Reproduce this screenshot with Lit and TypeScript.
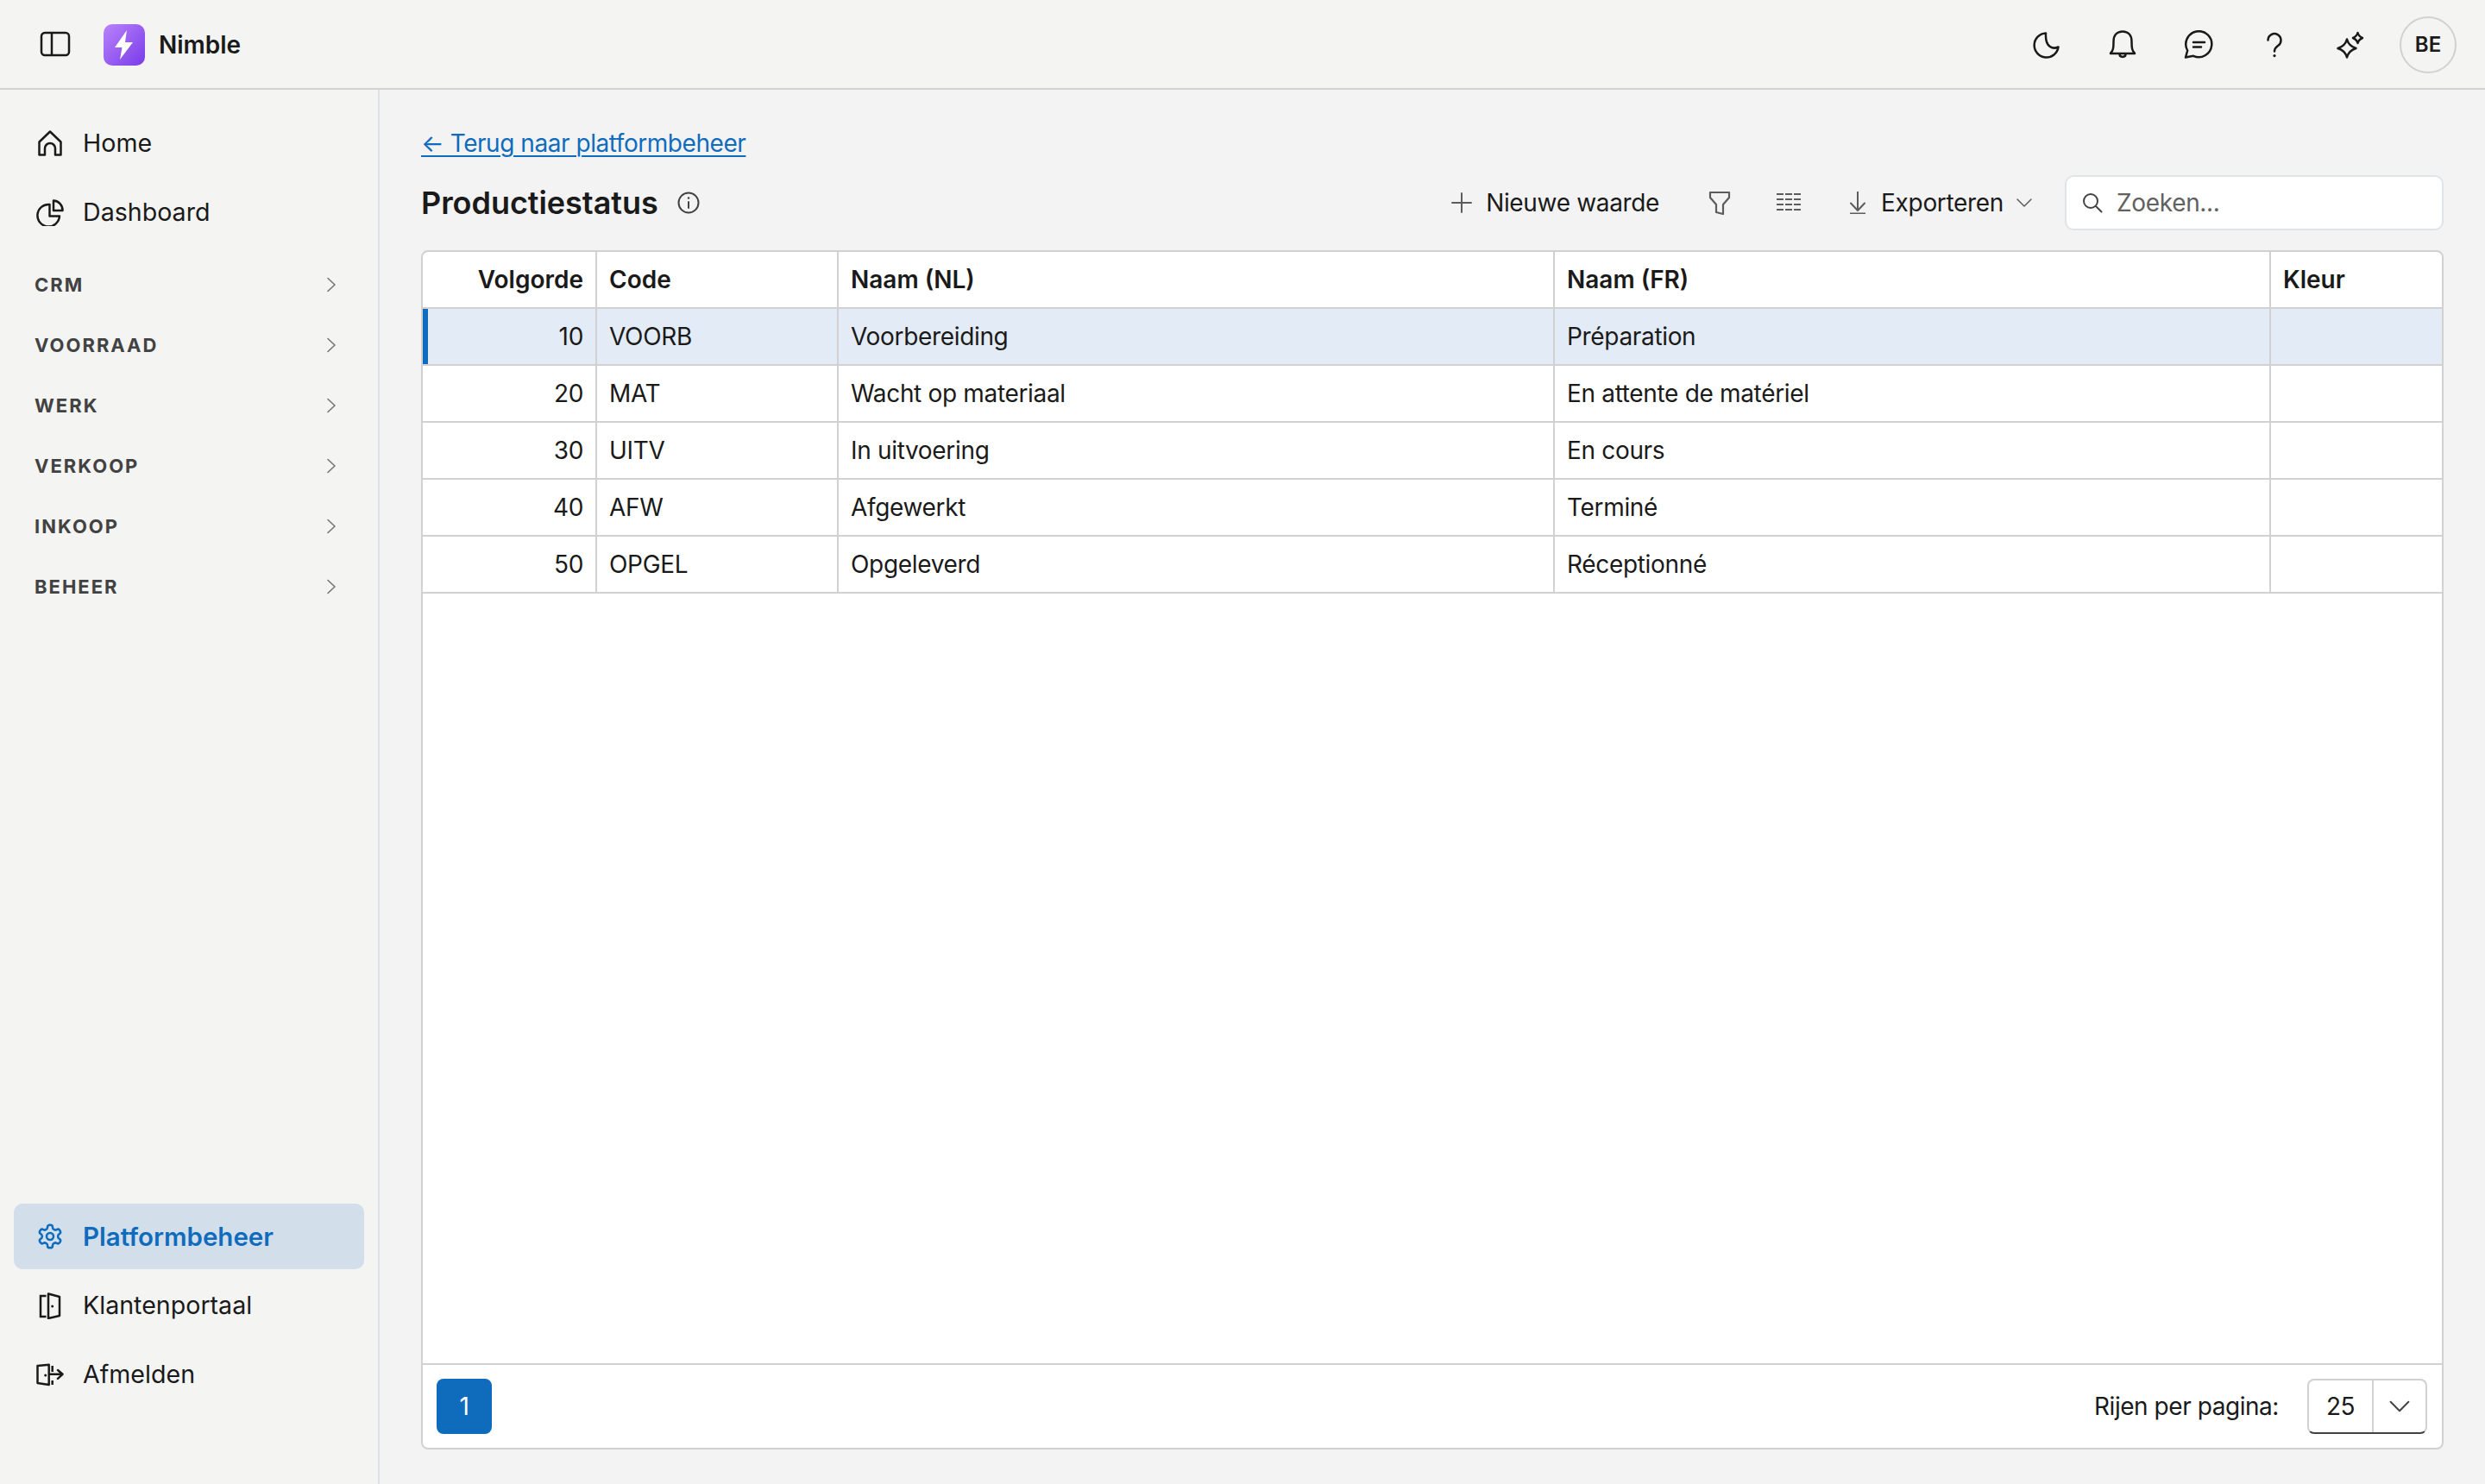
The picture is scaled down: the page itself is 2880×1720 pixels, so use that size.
import { css, html, LitElement, svg } from "lit";
import { customElement } from "lit/decorators.js";

const sections = ["CRM", "VOORRAAD", "WERK", "VERKOOP", "INKOOP", "BEHEER"];

const rows = [
  ["10", "VOORB", "Voorbereiding", "Préparation"],
  ["20", "MAT", "Wacht op materiaal", "En attente de matériel"],
  ["30", "UITV", "In uitvoering", "En cours"],
  ["40", "AFW", "Afgewerkt", "Terminé"],
  ["50", "OPGEL", "Opgeleverd", "Réceptionné"],
];

const icon = (size: number, body: unknown, width = 2.5) => html`<svg
  class="icon"
  width=${size}
  height=${size}
  viewBox="0 0 ${size} ${size}"
  fill="none"
  stroke="currentColor"
  stroke-width=${width}
  stroke-linecap="round"
  stroke-linejoin="round"
>
  ${body}
</svg>`;

const icons = {
  panel: icon(36, svg`<rect x="2" y="4" width="32" height="26" rx="4"/><path d="M14 4v26" stroke-linecap="butt"/>`),
  home: icon(32, svg`<path d="M3.500 29.500V14.500L16 2.500l12.500 12v15H22V22a6 6 0 0 0-12 0v7.500z"/>`),
  pie: icon(32, svg`<path d="M15.500 7A12.800 12.800 0 1 0 27 20.500H15.500z"/><path d="M20 2.500A11 11 0 0 1 30.500 14H20z"/>`),
  gear: html`<svg class="icon" width="32" height="32" viewBox="0 0 24 24" fill="none" stroke="currentColor" stroke-width="1.900" stroke-linecap="round" stroke-linejoin="round">
    <path d="M12.220 2h-.44a2 2 0 0 0-2 2v.18a2 2 0 0 1-1 1.730l-.43.25a2 2 0 0 1-2 0l-.15-.08a2 2 0 0 0-2.730.73l-.22.38a2 2 0 0 0 .73 2.730l.15.1a2 2 0 0 1 1 1.720v.51a2 2 0 0 1-1 1.740l-.15.09a2 2 0 0 0-.73 2.730l.22.38a2 2 0 0 0 2.730.73l.15-.08a2 2 0 0 1 2 0l.43.25a2 2 0 0 1 1 1.730V20a2 2 0 0 0 2 2h.44a2 2 0 0 0 2-2v-.18a2 2 0 0 1 1-1.730l.43-.25a2 2 0 0 1 2 0l.15.08a2 2 0 0 0 2.730-.73l.22-.39a2 2 0 0 0-.73-2.730l-.15-.08a2 2 0 0 1-1-1.740v-.5a2 2 0 0 1 1-1.740l.15-.09a2 2 0 0 0 .73-2.730l-.22-.38a2 2 0 0 0-2.730-.73l-.15.08a2 2 0 0 1-2 0l-.43-.25a2 2 0 0 1-1-1.730V4a2 2 0 0 0-2-2z"/>
    <circle cx="12" cy="12" r="3"/>
  </svg>`,
  door: icon(32, svg`<path d="M11.500 5H5v24h6.500" stroke-linecap="butt" stroke-linejoin="miter"/><path d="M14 2.500l13 3.500v22l-13 3z"/><path d="M18.700 17v.1" stroke-width="3"/>`),
  logout: icon(32, svg`<path d="M1.500 6l13.200-1.300V28L1.500 26z"/><path d="M10.700 17v.1" stroke-width="3"/><path d="M18.700 6v7M18.700 23v5" stroke-linecap="butt"/><path d="M16 15.800h14.500M25 11l5.500 4.800-5.500 5"/>`),
  chevronRight: icon(20, svg`<path d="M6 2.500l8 7.500-8 7.500"/>`, 1.600),
  moon: icon(32, svg`<path d="M15 2.500A14 14 0 1 0 29.500 18.500C24 21 14 20 15 2.500z"/>`),
  bell: icon(34, svg`<g transform="translate(0 -1)"><path d="M3 28c0-1 1.800-1.500 2.800-5 .8-3 .7-6 .7-9C6.500 7 10.500 2.500 17 2.500S27.500 7 27.500 14c0 3-.1 6 .7 9 1 3.500 2.800 4 2.800 5z"/><path d="M13.500 28.500c0 4.500 7 4.500 7 0"/></g>`),
  chat: icon(34, svg`<g transform="translate(0 -1)"><path d="M11 30.800A15 15 0 1 0 4.200 24.500L2 32.500z"/><path d="M11 15h13M11 20.500h9"/></g>`),
  question: icon(30, svg`<path d="M7.500 9.500A7.500 7.500 0 1 1 19 16c-2.500 1.800-4 3-4 6.500"/><path d="M15 27.500v.1" stroke-width="3.200"/>`),
  sparkle: icon(32, svg`<path d="M12 9.500c1.500 5.500 4 8.500 10.500 10.500-6.500 2-9 5-10.500 10.500-1.500-5.500-4-8.500-10.500-10.500 6.500-2 9-5 10.500-10.500z"/><path d="M24.500 2c.8 3 2 4.500 5.500 6-3.500 1.500-4.700 3-5.500 6-.8-3-2-4.500-5.500-6 3.500-1.500 4.700-3 5.500-6z"/>`),
  info: icon(26, svg`<circle cx="13" cy="13" r="11.500"/><path d="M13 12v7"/><path d="M13 7.500v.1" stroke-width="2.500"/>`, 2),
  plus: icon(24, svg`<path d="M12 1v22M1 12h22"/>`, 2),
  filter: icon(28, svg`<path d="M2 2h22v6l-7 8v11l-8-2v-9L2 8z"/>`, 2.200),
  columns: icon(28, svg`<path d="M0 4h8M10 4h8M20 4h8M0 10h8M10 10h8M20 10h8M0 16h8M10 16h8M20 16h8M0 22h8M10 22h8M20 22h8" stroke-linecap="butt"/>`, 2.200),
  download: icon(26, svg`<path d="M13 2v22M5 15.500l8 8.500 8-8.500" transform="translate(0 -2)"/><path d="M4 25.500h18" stroke-linecap="butt"/>`, 2),
  chevronDown: icon(20, svg`<path d="M2 6l8 8 8-8"/>`, 1.500),
  search: icon(24, svg`<circle cx="10" cy="10" r="8"/><path d="M16 16l6.500 6.500"/>`, 2),
};

@customElement("app-root")
export class AppRoot extends LitElement {
  static styles = css`
    :host {
      display: flex;
      flex-direction: column;
      height: 100vh;
      overflow: hidden;
      background: #f3f3f3;
      color: #1a1a1a;
      font-family: Inter, "Liberation Sans", sans-serif;
      font-size: 28px;
      line-height: 40px;
    }
    .icon {
      display: block;
      flex: none;
    }
    .topbar {
      display: flex;
      align-items: center;
      flex: none;
      box-sizing: border-box;
      height: 104px;
      padding: 2px 33px 0 46px;
      background: #f4f4f2;
      border-bottom: 2px solid #d1d1d1;
    }
    .logo {
      display: flex;
      align-items: center;
      justify-content: center;
      width: 48px;
      height: 48px;
      margin: 0 16px 0 38px;
      border-radius: 10px;
      background: linear-gradient(135deg, #b983fb, #7a3be8);
    }
    .brand {
      font-weight: 600;
      flex: 1;
    }
    .topicon {
      display: flex;
      justify-content: center;
      width: 88px;
    }
    .avatar {
      display: flex;
      align-items: center;
      justify-content: center;
      width: 62px;
      height: 62px;
      margin-left: 13px;
      border: 2px solid #d1d1d1;
      border-radius: 50%;
      font-size: 24px;
      font-weight: 600;
    }
    .body {
      display: flex;
      flex: 1;
      min-height: 0;
    }
    .sidebar {
      display: flex;
      flex-direction: column;
      flex: none;
      width: 406px;
      padding: 24px 16px 85px;
      background: #f4f4f2;
      border-right: 2px solid #dfe2e5;
    }
    .nav {
      display: flex;
      align-items: center;
      gap: 22px;
      height: 76px;
      margin-bottom: 4px;
      padding-left: 26px;
      border-radius: 10px;
      font-size: 28.6px;
    }
    .nav.active {
      background: #d2dfeb;
      color: #0f6cbd;
      font-size: 29.5px;
      font-weight: 600;
    }
    .section {
      display: flex;
      align-items: center;
      justify-content: space-between;
      height: 70px;
      padding: 0 28px 0 24px;
      font-size: 22px;
      font-weight: 700;
      letter-spacing: 2px;
      color: #424242;
    }
    .section .icon {
      color: #757575;
    }
    .sections {
      flex: 1;
      padding-top: 7px;
    }
    .main {
      display: flex;
      flex-direction: column;
      flex: 1;
      min-width: 0;
      padding: 42px 48px 40px;
      letter-spacing: -0.33px;
    }
    .back {
      color: #0f6cbd;
      letter-spacing: -0.45px;
      text-decoration: underline;
      text-decoration-thickness: 2px;
      text-underline-offset: 4px;
    }
    .back-row {
      height: 40px;
    }
    .heading {
      display: flex;
      align-items: center;
      height: 64px;
      margin: 17px 0 23px;
    }
    h1 {
      margin: 0 22px 0 0;
      font-size: 36px;
      font-weight: 600;
      line-height: 48px;
      letter-spacing: -0.05px;
    }
    .info {
      color: #424242;
      flex: 1;
    }
    .tool {
      display: flex;
      align-items: center;
      gap: 16px;
      color: #5c5c5c;
    }
    .tool span {
      color: #1a1a1a;
    }
    .tool-add {
      margin-right: 57px;
    }
    .tool-filter {
      margin-right: 51px;
    }
    .tool-columns {
      margin-right: 53px;
    }
    .tool-export {
      gap: 14px;
      margin-right: 37px;
    }
    .search {
      display: flex;
      align-items: center;
      gap: 16px;
      box-sizing: border-box;
      width: 439px;
      height: 64px;
      padding-left: 18px;
      background: #fff;
      border: 2px solid #e0e3e8;
      border-radius: 10px;
      color: #616161;
    }
    .search .icon {
      color: #424242;
    }
    .card {
      display: flex;
      flex-direction: column;
      flex: 1;
      min-height: 0;
      background: #fff;
      border: 2px solid #d1d1d1;
      border-radius: 8px;
    }
    .rows {
      flex: 1;
    }
    .row {
      display: grid;
      grid-template-columns: 202px 280px 830px 830px 1fr;
      height: 66px;
      box-sizing: border-box;
      border-bottom: 2px solid #d1d1d1;
    }
    .row.head {
      font-weight: 600;
      letter-spacing: 0;
    }
    .row.selected {
      background: #e3ecf6;
      box-shadow: inset 6px 0 0 #0f6cbd;
    }
    .cell {
      display: flex;
      align-items: center;
      padding: 0 14px;
      border-right: 2px solid #d1d1d1;
    }
    .cell:first-child {
      justify-content: flex-end;
    }
    .cell:last-child {
      border-right: none;
    }
    .footer {
      display: flex;
      align-items: center;
      justify-content: space-between;
      flex: none;
      height: 96px;
      padding: 0 17px 0 16px;
      border-top: 2px solid #d1d1d1;
    }
    .page {
      display: flex;
      align-items: center;
      justify-content: center;
      width: 64px;
      height: 64px;
      border-radius: 8px;
      background: #0f6cbd;
      color: #fff;
    }
    .per-page {
      display: flex;
      align-items: center;
      gap: 33px;
      letter-spacing: -0.45px;
    }
    .select {
      display: flex;
      box-sizing: border-box;
      width: 139px;
      height: 64px;
      border: 2px solid #d1d1d1;
      border-bottom-color: #424242;
      border-radius: 8px;
    }
    .select-value {
      display: flex;
      align-items: center;
      justify-content: center;
      width: 73px;
      border-right: 2px solid #d1d1d1;
    }
    .select-arrow {
      display: flex;
      align-items: center;
      justify-content: center;
      flex: 1;
      color: #424242;
    }
    .select-arrow .icon {
      width: 26px;
      height: 26px;
    }
  `;

  render() {
    return html`
      <header class="topbar">
        ${icons.panel}
        <div class="logo">
          <svg class="icon" width="22" height="34" viewBox="0 0 22 34" fill="#fff">
            <path d="M14 0 0 20h8.500L6 34l15-20h-9z" />
          </svg>
        </div>
        <div class="brand">Nimble</div>
        <div class="topicon">${icons.moon}</div>
        <div class="topicon">${icons.bell}</div>
        <div class="topicon">${icons.chat}</div>
        <div class="topicon">${icons.question}</div>
        <div class="topicon">${icons.sparkle}</div>
        <div class="avatar">BE</div>
      </header>
      <div class="body">
        <aside class="sidebar">
          <div class="nav">${icons.home}<span>Home</span></div>
          <div class="nav">${icons.pie}<span>Dashboard</span></div>
          <div class="sections">
            ${sections.map((s) => html`<div class="section"><span>${s}</span>${icons.chevronRight}</div>`)}
          </div>
          <div class="nav active">${icons.gear}<span>Platformbeheer</span></div>
          <div class="nav">${icons.door}<span>Klantenportaal</span></div>
          <div class="nav">${icons.logout}<span>Afmelden</span></div>
        </aside>
        <main class="main">
          <div class="back-row"><a class="back">← Terug naar platformbeheer</a></div>
          <div class="heading">
            <h1>Productiestatus</h1>
            <div class="info">${icons.info}</div>
            <div class="tool tool-add">${icons.plus}<span>Nieuwe waarde</span></div>
            <div class="tool tool-filter">${icons.filter}</div>
            <div class="tool tool-columns">${icons.columns}</div>
            <div class="tool tool-export">${icons.download}<span>Exporteren</span>${icons.chevronDown}</div>
            <div class="search">${icons.search}<span>Zoeken...</span></div>
          </div>
          <section class="card">
            <div class="rows">
              <div class="row head">
                ${["Volgorde", "Code", "Naam (NL)", "Naam (FR)", "Kleur"].map((c) => html`<div class="cell">${c}</div>`)}
              </div>
              ${rows.map(
                (r, i) => html`<div class="row ${i === 0 ? "selected" : ""}">
                  ${r.map((c) => html`<div class="cell">${c}</div>`)}
                  <div class="cell"></div>
                </div>`,
              )}
            </div>
            <div class="footer">
              <div class="page">1</div>
              <div class="per-page">
                <span>Rijen per pagina:</span>
                <div class="select">
                  <div class="select-value">25</div>
                  <div class="select-arrow">${icons.chevronDown}</div>
                </div>
              </div>
            </div>
          </section>
        </main>
      </div>
    `;
  }
}
